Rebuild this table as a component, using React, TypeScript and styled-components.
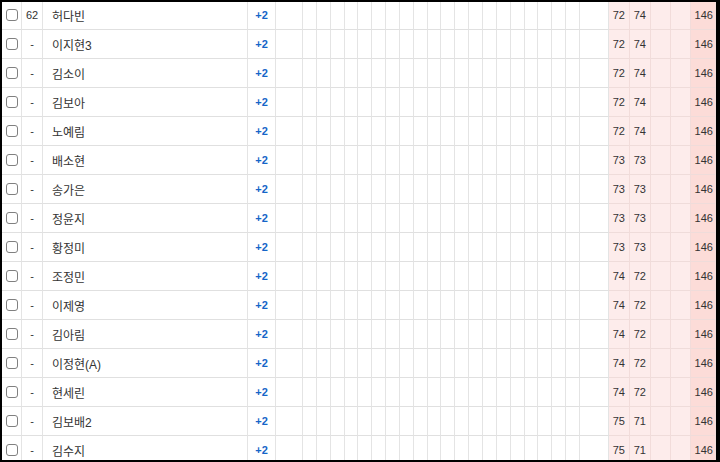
import React from 'react';
import styled, { createGlobalStyle } from 'styled-components';

const GlobalStyle = createGlobalStyle`
  html, body {
    margin: 0;
    padding: 0;
    background: #ffffff;
  }
  body {
    font-family: "Liberation Sans", "Noto Sans CJK KR", sans-serif;
  }
`;

const SFrame = styled.div`
  width: 720px;
  height: 462px;
  box-sizing: border-box;
  border-style: solid;
  border-color: #000;
  border-width: 2px 4px 2px 2px;
  overflow: hidden;
  background: #fff;
`;

const STable = styled.div`
  margin-top: -1px;
  display: flex;
  flex-direction: column;
`;

const SRow = styled.div`
  display: grid;
  grid-template-columns: 20px 21px 205px 28px 27px repeat(20, 13.85px) 29px 21px 21px 20px 20px 25px;
  height: 29px;
`;

const SCell = styled.div<{ $align?: 'left' | 'center' | 'right'; $tone?: 'none' | 'light' | 'deep' }>`
  box-sizing: border-box;
  display: flex;
  align-items: center;
  justify-content: ${(p) => (p.$align === 'left' ? 'flex-start' : p.$align === 'right' ? 'flex-end' : 'center')};
  padding: ${(p) => (p.$align === 'left' ? '0 0 0 9px' : p.$align === 'right' ? '0 2px 0 0' : '0')};
  border-right: 1px solid ${(p) => (p.$tone && p.$tone !== 'none' ? '#f2dcda' : '#e4e4e4')};
  border-bottom: 1px solid ${(p) => (p.$tone && p.$tone !== 'none' ? '#efdcda' : '#e0e0e0')};
  background: ${(p) => (p.$tone === 'light' ? '#fdeceb' : p.$tone === 'deep' ? '#fcdcd8' : '#fff')};
  font-size: 11px;
  color: #333;
  white-space: nowrap;
  overflow: hidden;
`;

const SCheck = styled.span`
  width: 10px;
  height: 10px;
  border: 1px solid #808080;
  border-radius: 3px;
  background: #fff;
  margin-left: 1px;
`;

const SName = styled.span`
  font-size: 12px;
  color: #333;
`;

const SDiff = styled.span`
  font-size: 11px;
  font-weight: 700;
  color: #1565c8;
`;

type Player = { rank: string; name: string; r1: number; r2: number; total: number };

const players: Player[] = [
  { rank: '62', name: '허다빈', r1: 72, r2: 74, total: 146 },
  { rank: '-', name: '이지현3', r1: 72, r2: 74, total: 146 },
  { rank: '-', name: '김소이', r1: 72, r2: 74, total: 146 },
  { rank: '-', name: '김보아', r1: 72, r2: 74, total: 146 },
  { rank: '-', name: '노예림', r1: 72, r2: 74, total: 146 },
  { rank: '-', name: '배소현', r1: 73, r2: 73, total: 146 },
  { rank: '-', name: '송가은', r1: 73, r2: 73, total: 146 },
  { rank: '-', name: '정윤지', r1: 73, r2: 73, total: 146 },
  { rank: '-', name: '황정미', r1: 73, r2: 73, total: 146 },
  { rank: '-', name: '조정민', r1: 74, r2: 72, total: 146 },
  { rank: '-', name: '이제영', r1: 74, r2: 72, total: 146 },
  { rank: '-', name: '김아림', r1: 74, r2: 72, total: 146 },
  { rank: '-', name: '이정현(A)', r1: 74, r2: 72, total: 146 },
  { rank: '-', name: '현세린', r1: 74, r2: 72, total: 146 },
  { rank: '-', name: '김보배2', r1: 75, r2: 71, total: 146 },
  { rank: '-', name: '김수지', r1: 75, r2: 71, total: 146 },
];

// blank hole-by-hole cells between the diff column and the round scores
const holes = Array.from({ length: 22 });

const App = () => {
  return (
    <>
      <GlobalStyle />
      <SFrame>
        <STable>
          {players.map((p, i) => (
            <SRow key={i}>
              <SCell>
                <SCheck />
              </SCell>
              <SCell>{p.rank}</SCell>
              <SCell $align="left">
                <SName>{p.name}</SName>
              </SCell>
              <SCell>
                <SDiff>+2</SDiff>
              </SCell>
              {holes.map((_, h) => (
                <SCell key={h} />
              ))}
              <SCell $tone="light">{p.r1}</SCell>
              <SCell $tone="light">{p.r2}</SCell>
              <SCell $tone="light" />
              <SCell $tone="light" />
              <SCell $tone="deep" $align="right">
                {p.total}
              </SCell>
            </SRow>
          ))}
        </STable>
      </SFrame>
    </>
  );
};

export default App;
